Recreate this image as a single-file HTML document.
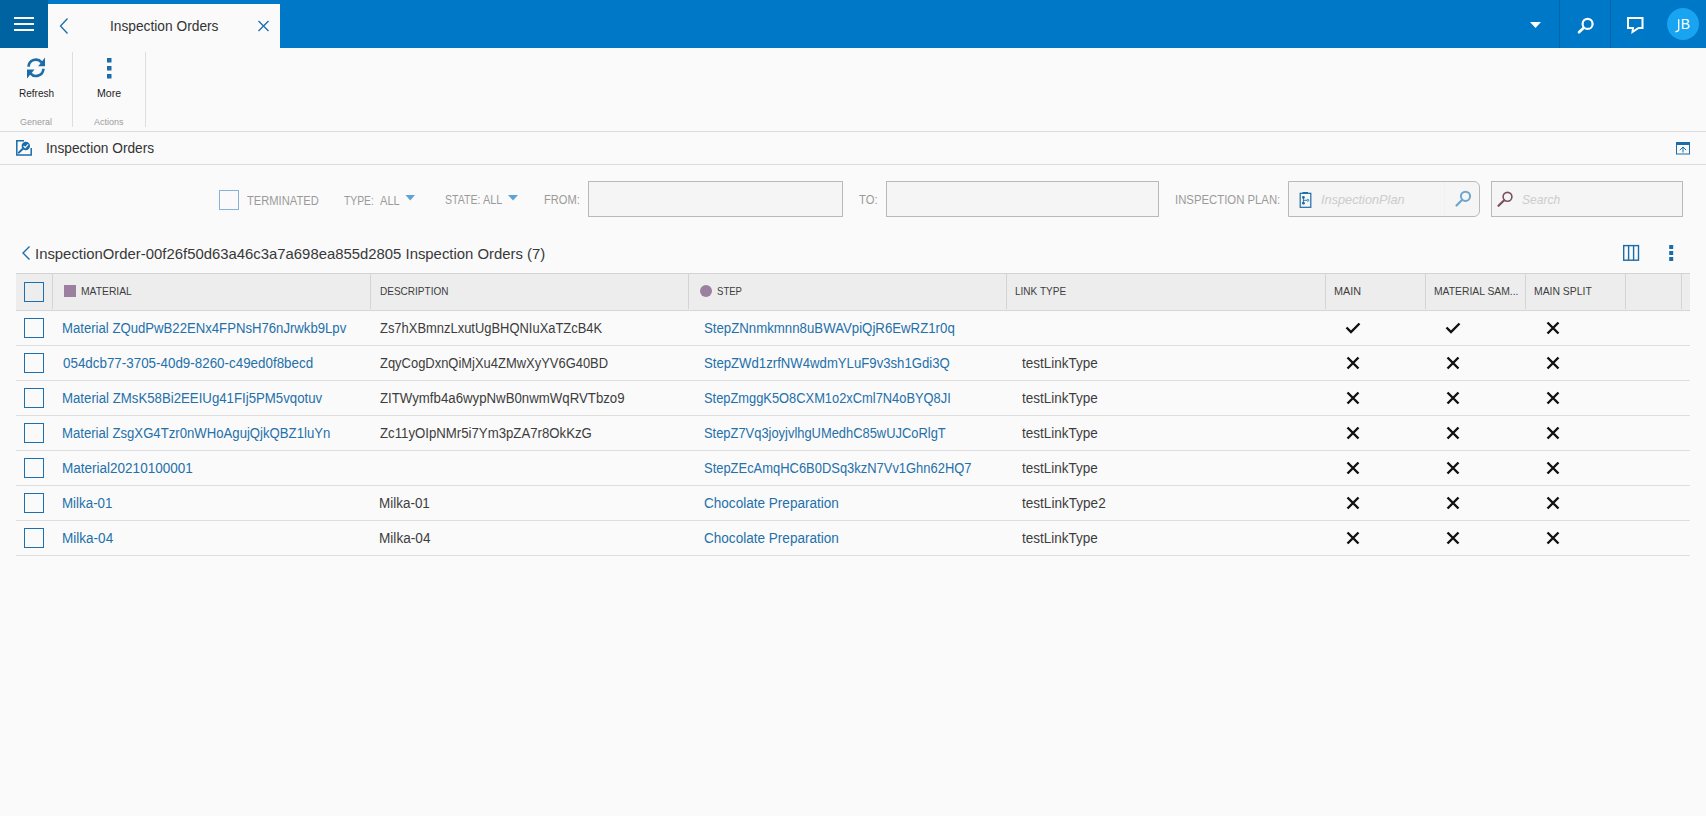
<!DOCTYPE html>
<html><head><meta charset="utf-8">
<style>
html,body{margin:0;padding:0;}
body{width:1706px;height:816px;position:relative;overflow:hidden;background:#fafafa;font-family:"Liberation Sans",sans-serif;color:#333;}
.a{position:absolute;}
.t{position:absolute;white-space:nowrap;line-height:1;}
.hl{position:absolute;height:1px;}
.vl{position:absolute;width:1px;}
.inp{position:absolute;box-sizing:border-box;border:1px solid #b9b9b9;background:#f5f5f5;}
.cb{position:absolute;box-sizing:border-box;width:20px;height:20px;border:1px solid #1d6fad;}
</style></head><body>
<div class="a" style="left:0;top:0;width:1706px;height:48px;background:#0078c8;"></div>
<div class="a" style="left:0;top:0;width:48px;height:48px;background:#0063a1;"></div>
<div class="a" style="left:48px;top:4px;width:232px;height:44px;background:#fafafa;"></div>
<div class="vl" style="left:1559px;top:0;height:48px;background:#0862a8;"></div>
<div class="vl" style="left:1610px;top:0;height:48px;background:#0862a8;"></div>
<div class="a" style="left:1667px;top:8px;width:32px;height:32px;border-radius:50%;background:#18a4f0;"></div>
<div class="vl" style="left:72px;top:52px;height:75px;background:#dedede;"></div>
<div class="vl" style="left:145px;top:52px;height:75px;background:#dedede;"></div>
<div class="hl" style="left:0;top:131px;width:1706px;background:#dcdcdc;"></div>
<div class="hl" style="left:0;top:164px;width:1706px;background:#dcdcdc;"></div>
<div class="cb" style="left:219px;top:190px;border-color:#86b3d6;"></div>
<div class="inp" style="left:588px;top:181px;width:255px;height:36px;"></div>
<div class="inp" style="left:886px;top:181px;width:273px;height:36px;"></div>
<div class="inp" style="left:1288px;top:181px;width:192px;height:36px;border-radius:0 6px 6px 0;"></div>
<div class="vl" style="left:1444px;top:182px;height:34px;background:#f0f0f0;"></div>
<div class="inp" style="left:1491px;top:181px;width:192px;height:36px;"></div>
<div class="a" style="left:16px;top:273px;width:1674px;height:38px;background:#ededed;"></div>
<div class="hl" style="left:16px;top:273px;width:1674px;background:#d2d2d2;"></div>
<div class="hl" style="left:16px;top:310px;width:1674px;background:#d6d6d6;"></div>
<div class="vl" style="left:52px;top:274px;height:35px;background:#d4d4d4;"></div>
<div class="vl" style="left:370px;top:274px;height:35px;background:#d4d4d4;"></div>
<div class="vl" style="left:688px;top:274px;height:35px;background:#d4d4d4;"></div>
<div class="vl" style="left:1006px;top:274px;height:35px;background:#d4d4d4;"></div>
<div class="vl" style="left:1325px;top:274px;height:35px;background:#d4d4d4;"></div>
<div class="vl" style="left:1425px;top:274px;height:35px;background:#d4d4d4;"></div>
<div class="vl" style="left:1525px;top:274px;height:35px;background:#d4d4d4;"></div>
<div class="vl" style="left:1625px;top:274px;height:35px;background:#d4d4d4;"></div>
<div class="vl" style="left:1681px;top:274px;height:35px;background:#d4d4d4;"></div>
<div class="cb" style="left:24px;top:282px;"></div>
<div class="a" style="left:64px;top:285px;width:12px;height:12px;background:#9b80a0;"></div>
<div class="a" style="left:700px;top:285px;width:12px;height:12px;border-radius:50%;background:#9b80a0;"></div>
<div class="hl" style="left:16px;top:345px;width:1674px;background:#dedede;"></div>
<div class="hl" style="left:16px;top:380px;width:1674px;background:#dedede;"></div>
<div class="hl" style="left:16px;top:415px;width:1674px;background:#dedede;"></div>
<div class="hl" style="left:16px;top:450px;width:1674px;background:#dedede;"></div>
<div class="hl" style="left:16px;top:485px;width:1674px;background:#dedede;"></div>
<div class="hl" style="left:16px;top:520px;width:1674px;background:#dedede;"></div>
<div class="hl" style="left:16px;top:555px;width:1674px;background:#dedede;"></div>
<div class="cb" style="left:24px;top:318px;"></div>
<div class="cb" style="left:24px;top:353px;"></div>
<div class="cb" style="left:24px;top:388px;"></div>
<div class="cb" style="left:24px;top:423px;"></div>
<div class="cb" style="left:24px;top:458px;"></div>
<div class="cb" style="left:24px;top:493px;"></div>
<div class="cb" style="left:24px;top:528px;"></div>
<div class="t" id="tab" style="left:109.52px;top:19.00px;font-size:14px;color:#333;transform:scaleX(0.9818);transform-origin:0 0;">Inspection Orders</div>
<div class="t" id="jbb" style="left:1680.80px;top:17.00px;font-size:14px;color:#fff;letter-spacing:-0.300px;">B</div>
<div class="t" id="refresh" style="left:18.70px;top:87.80px;font-size:11px;color:#1e1e1e;transform:scaleX(0.9115);transform-origin:0 0;">Refresh</div>
<div class="t" id="more" style="left:97.00px;top:87.80px;font-size:11px;color:#1e1e1e;transform:scaleX(0.9622);transform-origin:0 0;">More</div>
<div class="t" id="general" style="left:19.80px;top:117.60px;font-size:9px;color:#9c9c9c;transform:scaleX(0.9994);transform-origin:0 0;">General</div>
<div class="t" id="actions" style="left:94.00px;top:117.60px;font-size:9px;color:#9c9c9c;transform:scaleX(0.9995);transform-origin:0 0;">Actions</div>
<div class="t" id="sect" style="left:45.72px;top:141.10px;font-size:14px;color:#333;transform:scaleX(0.9781);transform-origin:0 0;">Inspection Orders</div>
<div class="t" id="term" style="left:247.40px;top:195.00px;font-size:12px;color:#9a9a9a;transform:scaleX(0.9297);transform-origin:0 0;">TERMINATED</div>
<div class="t" id="type" style="left:344.20px;top:195.00px;font-size:12px;color:#9a9a9a;transform:scaleX(0.8619);transform-origin:0 0;">TYPE:</div>
<div class="t" id="type2" style="left:380.00px;top:195.00px;font-size:12px;color:#9a9a9a;transform:scaleX(0.9226);transform-origin:0 0;">ALL</div>
<div class="t" id="state" style="left:444.80px;top:194.00px;font-size:12px;color:#9a9a9a;transform:scaleX(0.8799);transform-origin:0 0;">STATE:</div>
<div class="t" id="state2" style="left:483.00px;top:194.00px;font-size:12px;color:#9a9a9a;transform:scaleX(0.9042);transform-origin:0 0;">ALL</div>
<div class="t" id="from" style="left:543.60px;top:194.00px;font-size:12px;color:#9a9a9a;transform:scaleX(0.9237);transform-origin:0 0;">FROM:</div>
<div class="t" id="to" style="left:859.20px;top:193.80px;font-size:12px;color:#9a9a9a;transform:scaleX(0.9359);transform-origin:0 0;">TO:</div>
<div class="t" id="iplan" style="left:1174.65px;top:193.80px;font-size:12px;color:#9a9a9a;transform:scaleX(0.9453);transform-origin:0 0;">INSPECTION PLAN:</div>
<div class="t" id="iph" style="left:1320.60px;top:193.20px;font-size:13px;color:#cccccc;transform:scaleX(0.9806);transform-origin:0 0;font-style:italic;">InspectionPlan</div>
<div class="t" id="sph" style="left:1522.00px;top:193.20px;font-size:13px;color:#cccccc;transform:scaleX(0.9277);transform-origin:0 0;font-style:italic;">Search</div>
<div class="t" id="crumb" style="left:35.41px;top:245.50px;font-size:15px;color:#383838;transform:scaleX(0.9916);transform-origin:0 0;">InspectionOrder-00f26f50d63a46c3a7a698ea855d2805 Inspection Orders (7)</div>
<div class="t" id="h_mat" style="left:81.30px;top:286.10px;font-size:11px;color:#3d3d3d;transform:scaleX(0.9376);transform-origin:0 0;">MATERIAL</div>
<div class="t" id="h_desc" style="left:379.50px;top:286.10px;font-size:11px;color:#3d3d3d;transform:scaleX(0.9105);transform-origin:0 0;">DESCRIPTION</div>
<div class="t" id="h_step" style="left:717.30px;top:286.10px;font-size:11px;color:#3d3d3d;transform:scaleX(0.8699);transform-origin:0 0;">STEP</div>
<div class="t" id="h_link" style="left:1015.30px;top:286.10px;font-size:11px;color:#3d3d3d;transform:scaleX(0.9123);transform-origin:0 0;">LINK TYPE</div>
<div class="t" id="h_main" style="left:1334.40px;top:286.10px;font-size:11px;color:#3d3d3d;transform:scaleX(0.9834);transform-origin:0 0;">MAIN</div>
<div class="t" id="h_ms" style="left:1434.00px;top:286.10px;font-size:11px;color:#3d3d3d;transform:scaleX(0.9401);transform-origin:0 0;">MATERIAL SAM...</div>
<div class="t" id="h_split" style="left:1534.00px;top:286.10px;font-size:11px;color:#3d3d3d;transform:scaleX(0.9446);transform-origin:0 0;">MAIN SPLIT</div>
<div class="t" id="m0" style="left:61.66px;top:321.10px;font-size:14px;color:#2470aa;transform:scaleX(0.9391);transform-origin:0 0;">Material ZQudPwB22ENx4FPNsH76nJrwkb9Lpv</div>
<div class="t" id="d0" style="left:380.20px;top:321.10px;font-size:14px;color:#3d3d3d;transform:scaleX(0.9242);transform-origin:0 0;">Zs7hXBmnzLxutUgBHQNIuXaTZcB4K</div>
<div class="t" id="s0" style="left:703.50px;top:321.10px;font-size:14px;color:#2470aa;transform:scaleX(0.9451);transform-origin:0 0;">StepZNnmkmnn8uBWAVpiQjR6EwRZ1r0q</div>
<div class="t" id="m1" style="left:62.60px;top:356.10px;font-size:14px;color:#2470aa;transform:scaleX(0.9564);transform-origin:0 0;">054dcb77-3705-40d9-8260-c49ed0f8becd</div>
<div class="t" id="d1" style="left:380.20px;top:356.10px;font-size:14px;color:#3d3d3d;transform:scaleX(0.9249);transform-origin:0 0;">ZqyCogDxnQiMjXu4ZMwXyYV6G40BD</div>
<div class="t" id="s1" style="left:703.50px;top:356.10px;font-size:14px;color:#2470aa;transform:scaleX(0.9402);transform-origin:0 0;">StepZWd1zrfNW4wdmYLuF9v3sh1Gdi3Q</div>
<div class="t" id="l1" style="left:1022.00px;top:356.10px;font-size:14px;color:#3d3d3d;transform:scaleX(0.9643);transform-origin:0 0;">testLinkType</div>
<div class="t" id="m2" style="left:61.66px;top:391.10px;font-size:14px;color:#2470aa;transform:scaleX(0.9444);transform-origin:0 0;">Material ZMsK58Bi2EEIUg41FIj5PM5vqotuv</div>
<div class="t" id="d2" style="left:380.20px;top:391.10px;font-size:14px;color:#3d3d3d;transform:scaleX(0.9455);transform-origin:0 0;">ZITWymfb4a6wypNwB0nwmWqRVTbzo9</div>
<div class="t" id="s2" style="left:703.50px;top:391.10px;font-size:14px;color:#2470aa;transform:scaleX(0.9191);transform-origin:0 0;">StepZmggK5O8CXM1o2xCml7N4oBYQ8JI</div>
<div class="t" id="l2" style="left:1022.00px;top:391.10px;font-size:14px;color:#3d3d3d;transform:scaleX(0.9643);transform-origin:0 0;">testLinkType</div>
<div class="t" id="m3" style="left:61.66px;top:426.10px;font-size:14px;color:#2470aa;transform:scaleX(0.9396);transform-origin:0 0;">Material ZsgXG4Tzr0nWHoAgujQjkQBZ1luYn</div>
<div class="t" id="d3" style="left:380.20px;top:426.10px;font-size:14px;color:#3d3d3d;transform:scaleX(0.9433);transform-origin:0 0;">Zc11yOIpNMr5i7Ym3pZA7r8OkKzG</div>
<div class="t" id="s3" style="left:703.50px;top:426.10px;font-size:14px;color:#2470aa;transform:scaleX(0.9217);transform-origin:0 0;">StepZ7Vq3joyjvlhgUMedhC85wUJCoRlgT</div>
<div class="t" id="l3" style="left:1022.00px;top:426.10px;font-size:14px;color:#3d3d3d;transform:scaleX(0.9643);transform-origin:0 0;">testLinkType</div>
<div class="t" id="m4" style="left:61.63px;top:461.10px;font-size:14px;color:#2470aa;transform:scaleX(0.9654);transform-origin:0 0;">Material20210100001</div>
<div class="t" id="s4" style="left:703.50px;top:461.10px;font-size:14px;color:#2470aa;transform:scaleX(0.9241);transform-origin:0 0;">StepZEcAmqHC6B0DSq3kzN7Vv1Ghn62HQ7</div>
<div class="t" id="l4" style="left:1022.00px;top:461.10px;font-size:14px;color:#3d3d3d;transform:scaleX(0.9643);transform-origin:0 0;">testLinkType</div>
<div class="t" id="m5" style="left:61.65px;top:496.10px;font-size:14px;color:#2470aa;transform:scaleX(0.9536);transform-origin:0 0;">Milka-01</div>
<div class="t" id="d5" style="left:379.24px;top:496.10px;font-size:14px;color:#3d3d3d;transform:scaleX(0.9613);transform-origin:0 0;">Milka-01</div>
<div class="t" id="s5" style="left:703.50px;top:496.10px;font-size:14px;color:#2470aa;transform:scaleX(0.9681);transform-origin:0 0;">Chocolate Preparation</div>
<div class="t" id="l5" style="left:1022.00px;top:496.10px;font-size:14px;color:#3d3d3d;transform:scaleX(0.9688);transform-origin:0 0;">testLinkType2</div>
<div class="t" id="m6" style="left:61.63px;top:531.10px;font-size:14px;color:#2470aa;transform:scaleX(0.9671);transform-origin:0 0;">Milka-04</div>
<div class="t" id="d6" style="left:379.23px;top:531.10px;font-size:14px;color:#3d3d3d;transform:scaleX(0.9728);transform-origin:0 0;">Milka-04</div>
<div class="t" id="s6" style="left:703.50px;top:531.10px;font-size:14px;color:#2470aa;transform:scaleX(0.9681);transform-origin:0 0;">Chocolate Preparation</div>
<div class="t" id="l6" style="left:1022.00px;top:531.10px;font-size:14px;color:#3d3d3d;transform:scaleX(0.9643);transform-origin:0 0;">testLinkType</div>
<svg class="a" style="left:0;top:0;" width="1706" height="816" viewBox="0 0 1706 816">
<rect x="14" y="17" width="20" height="2" fill="#fff"/>
<rect x="14" y="23" width="20" height="2" fill="#fff"/>
<rect x="14" y="29" width="20" height="2" fill="#fff"/>
<path d="M67.5 18.5 L60.5 26 L67.5 33.5" fill="none" stroke="#1b6ca8" stroke-width="1.3"/>
<path d="M258.5 21 L268.5 31 M268.5 21 L258.5 31" fill="none" stroke="#1b6ca8" stroke-width="1.3"/>
<path d="M1530 22 L1541 22 L1535.5 28 Z" fill="#fff"/>
<circle cx="1587.6" cy="23.9" r="5" fill="none" stroke="#fff" stroke-width="2.2"/>
<path d="M1583.5 28 L1579 32.3" stroke="#fff" stroke-width="2.6" stroke-linecap="round"/>
<path d="M1628 18 L1642.5 18 L1642.5 28 L1638.5 28 L1632.5 32 L1633 28 L1628 28 Z" fill="none" stroke="#fff" stroke-width="2" stroke-linejoin="miter"/>
<path d="M28.6 66.8 A7.3 7.3 0 0 1 41.5 62.3" fill="none" stroke="#1b6ca8" stroke-width="2.6"/>
<path d="M45 57.5 L45 66.3 L38.2 66.3 Z" fill="#1b6ca8"/>
<path d="M43.4 68.8 A7.3 7.3 0 0 1 30.5 73.3" fill="none" stroke="#1b6ca8" stroke-width="2.6"/>
<path d="M27 78.5 L27 69.5 L34.5 69.5 Z" fill="#1b6ca8"/>
<rect x="107" y="58" width="4.5" height="4.5" fill="#1b6ca8"/>
<rect x="107" y="66" width="4.5" height="4.5" fill="#1b6ca8"/>
<rect x="107" y="74" width="4.5" height="4.5" fill="#1b6ca8"/>
<path d="M24 140.8 L16.8 140.8 L16.8 155 L31.2 155 L31.2 148" fill="none" stroke="#1b6ca8" stroke-width="1.5"/>
<circle cx="25.8" cy="146" r="4.2" fill="#1b6ca8"/>
<path d="M23.6 146 L25.2 147.6 L28.2 144.3" fill="none" stroke="#fff" stroke-width="1.1"/>
<path d="M22.8 148.8 L18.8 152.6" stroke="#1b6ca8" stroke-width="2" stroke-linecap="round"/>
<rect x="1676.5" y="142.5" width="13" height="11.5" fill="none" stroke="#1b6ca8" stroke-width="1"/>
<rect x="1676" y="142" width="14" height="3" fill="#1b6ca8"/>
<path d="M1679.8 150.2 L1683 147 L1686.2 150.2 M1683 147.5 L1683 152.5" fill="none" stroke="#1b6ca8" stroke-width="1"/>
<rect x="1300.2" y="193.3" width="10.6" height="14" fill="none" stroke="#1b6ca8" stroke-width="1.2"/>
<rect x="1302.5" y="192" width="5.5" height="1.6" fill="#1b6ca8"/>
<circle cx="1303.4" cy="197.4" r="1.4" fill="#1b6ca8"/><circle cx="1303.4" cy="203.2" r="1.4" fill="#1b6ca8"/>
<path d="M1303.4 197.4 L1303.4 203.2 M1303.4 200.3 L1306.8 200.3" stroke="#1b6ca8" stroke-width="0.9"/>
<circle cx="1307.8" cy="200.3" r="1" fill="none" stroke="#1b6ca8" stroke-width="0.8"/>
<circle cx="1465.5" cy="196.3" r="4.6" fill="none" stroke="#6ea6cf" stroke-width="2"/>
<path d="M1462.2 199.8 L1456.5 205.5" stroke="#6ea6cf" stroke-width="2.2" stroke-linecap="round"/>
<circle cx="1507.5" cy="196.8" r="4.4" fill="none" stroke="#7a4e5e" stroke-width="1.6"/>
<path d="M1504.2 200.2 L1498.5 205.8" stroke="#7a4e5e" stroke-width="2.2" stroke-linecap="round"/>
<path d="M1485.5 0" />
<path d="M405.5 195 L415 195 L410.25 200.5 Z" fill="#5ea3d6"/>
<path d="M508 195 L518 195 L513 200.5 Z" fill="#5ea3d6"/>
<path d="M29.5 246.5 L23 253 L29.5 259.5" fill="none" stroke="#1b6ca8" stroke-width="1.4"/>
<rect x="1623.7" y="245.6" width="14.8" height="14.6" fill="none" stroke="#1b6ca8" stroke-width="1.4"/>
<path d="M1628.6 245.6 L1628.6 260.2 M1633.6 245.6 L1633.6 260.2" stroke="#1b6ca8" stroke-width="1.4"/>
<rect x="1669.2" y="245" width="4" height="4" fill="#1b6ca8"/>
<rect x="1669.2" y="251" width="4" height="4" fill="#1b6ca8"/>
<rect x="1669.2" y="257" width="4" height="4" fill="#1b6ca8"/>
<path d="M1346.5 327.5 L1351 332 L1359.5 323.5" fill="none" stroke="#111" stroke-width="2.4"/>
<path d="M1446.5 327.5 L1451 332 L1459.5 323.5" fill="none" stroke="#111" stroke-width="2.4"/>
<path d="M1547.5 322.5 L1558.5 333.5 M1558.5 322.5 L1547.5 333.5" fill="none" stroke="#111" stroke-width="2.4"/>
<path d="M1347.5 357.5 L1358.5 368.5 M1358.5 357.5 L1347.5 368.5" fill="none" stroke="#111" stroke-width="2.4"/>
<path d="M1447.5 357.5 L1458.5 368.5 M1458.5 357.5 L1447.5 368.5" fill="none" stroke="#111" stroke-width="2.4"/>
<path d="M1547.5 357.5 L1558.5 368.5 M1558.5 357.5 L1547.5 368.5" fill="none" stroke="#111" stroke-width="2.4"/>
<path d="M1347.5 392.5 L1358.5 403.5 M1358.5 392.5 L1347.5 403.5" fill="none" stroke="#111" stroke-width="2.4"/>
<path d="M1447.5 392.5 L1458.5 403.5 M1458.5 392.5 L1447.5 403.5" fill="none" stroke="#111" stroke-width="2.4"/>
<path d="M1547.5 392.5 L1558.5 403.5 M1558.5 392.5 L1547.5 403.5" fill="none" stroke="#111" stroke-width="2.4"/>
<path d="M1347.5 427.5 L1358.5 438.5 M1358.5 427.5 L1347.5 438.5" fill="none" stroke="#111" stroke-width="2.4"/>
<path d="M1447.5 427.5 L1458.5 438.5 M1458.5 427.5 L1447.5 438.5" fill="none" stroke="#111" stroke-width="2.4"/>
<path d="M1547.5 427.5 L1558.5 438.5 M1558.5 427.5 L1547.5 438.5" fill="none" stroke="#111" stroke-width="2.4"/>
<path d="M1347.5 462.5 L1358.5 473.5 M1358.5 462.5 L1347.5 473.5" fill="none" stroke="#111" stroke-width="2.4"/>
<path d="M1447.5 462.5 L1458.5 473.5 M1458.5 462.5 L1447.5 473.5" fill="none" stroke="#111" stroke-width="2.4"/>
<path d="M1547.5 462.5 L1558.5 473.5 M1558.5 462.5 L1547.5 473.5" fill="none" stroke="#111" stroke-width="2.4"/>
<path d="M1347.5 497.5 L1358.5 508.5 M1358.5 497.5 L1347.5 508.5" fill="none" stroke="#111" stroke-width="2.4"/>
<path d="M1447.5 497.5 L1458.5 508.5 M1458.5 497.5 L1447.5 508.5" fill="none" stroke="#111" stroke-width="2.4"/>
<path d="M1547.5 497.5 L1558.5 508.5 M1558.5 497.5 L1547.5 508.5" fill="none" stroke="#111" stroke-width="2.4"/>
<path d="M1347.5 532.5 L1358.5 543.5 M1358.5 532.5 L1347.5 543.5" fill="none" stroke="#111" stroke-width="2.4"/>
<path d="M1447.5 532.5 L1458.5 543.5 M1458.5 532.5 L1447.5 543.5" fill="none" stroke="#111" stroke-width="2.4"/>
<path d="M1547.5 532.5 L1558.5 543.5 M1558.5 532.5 L1547.5 543.5" fill="none" stroke="#111" stroke-width="2.4"/>
<path d="M1678.7 19.2 L1678.7 29.6 Q1678.7 31.7 1675.4 31.7" stroke="#fff" stroke-width="1.35" fill="none"/>
</svg>
</body></html>
